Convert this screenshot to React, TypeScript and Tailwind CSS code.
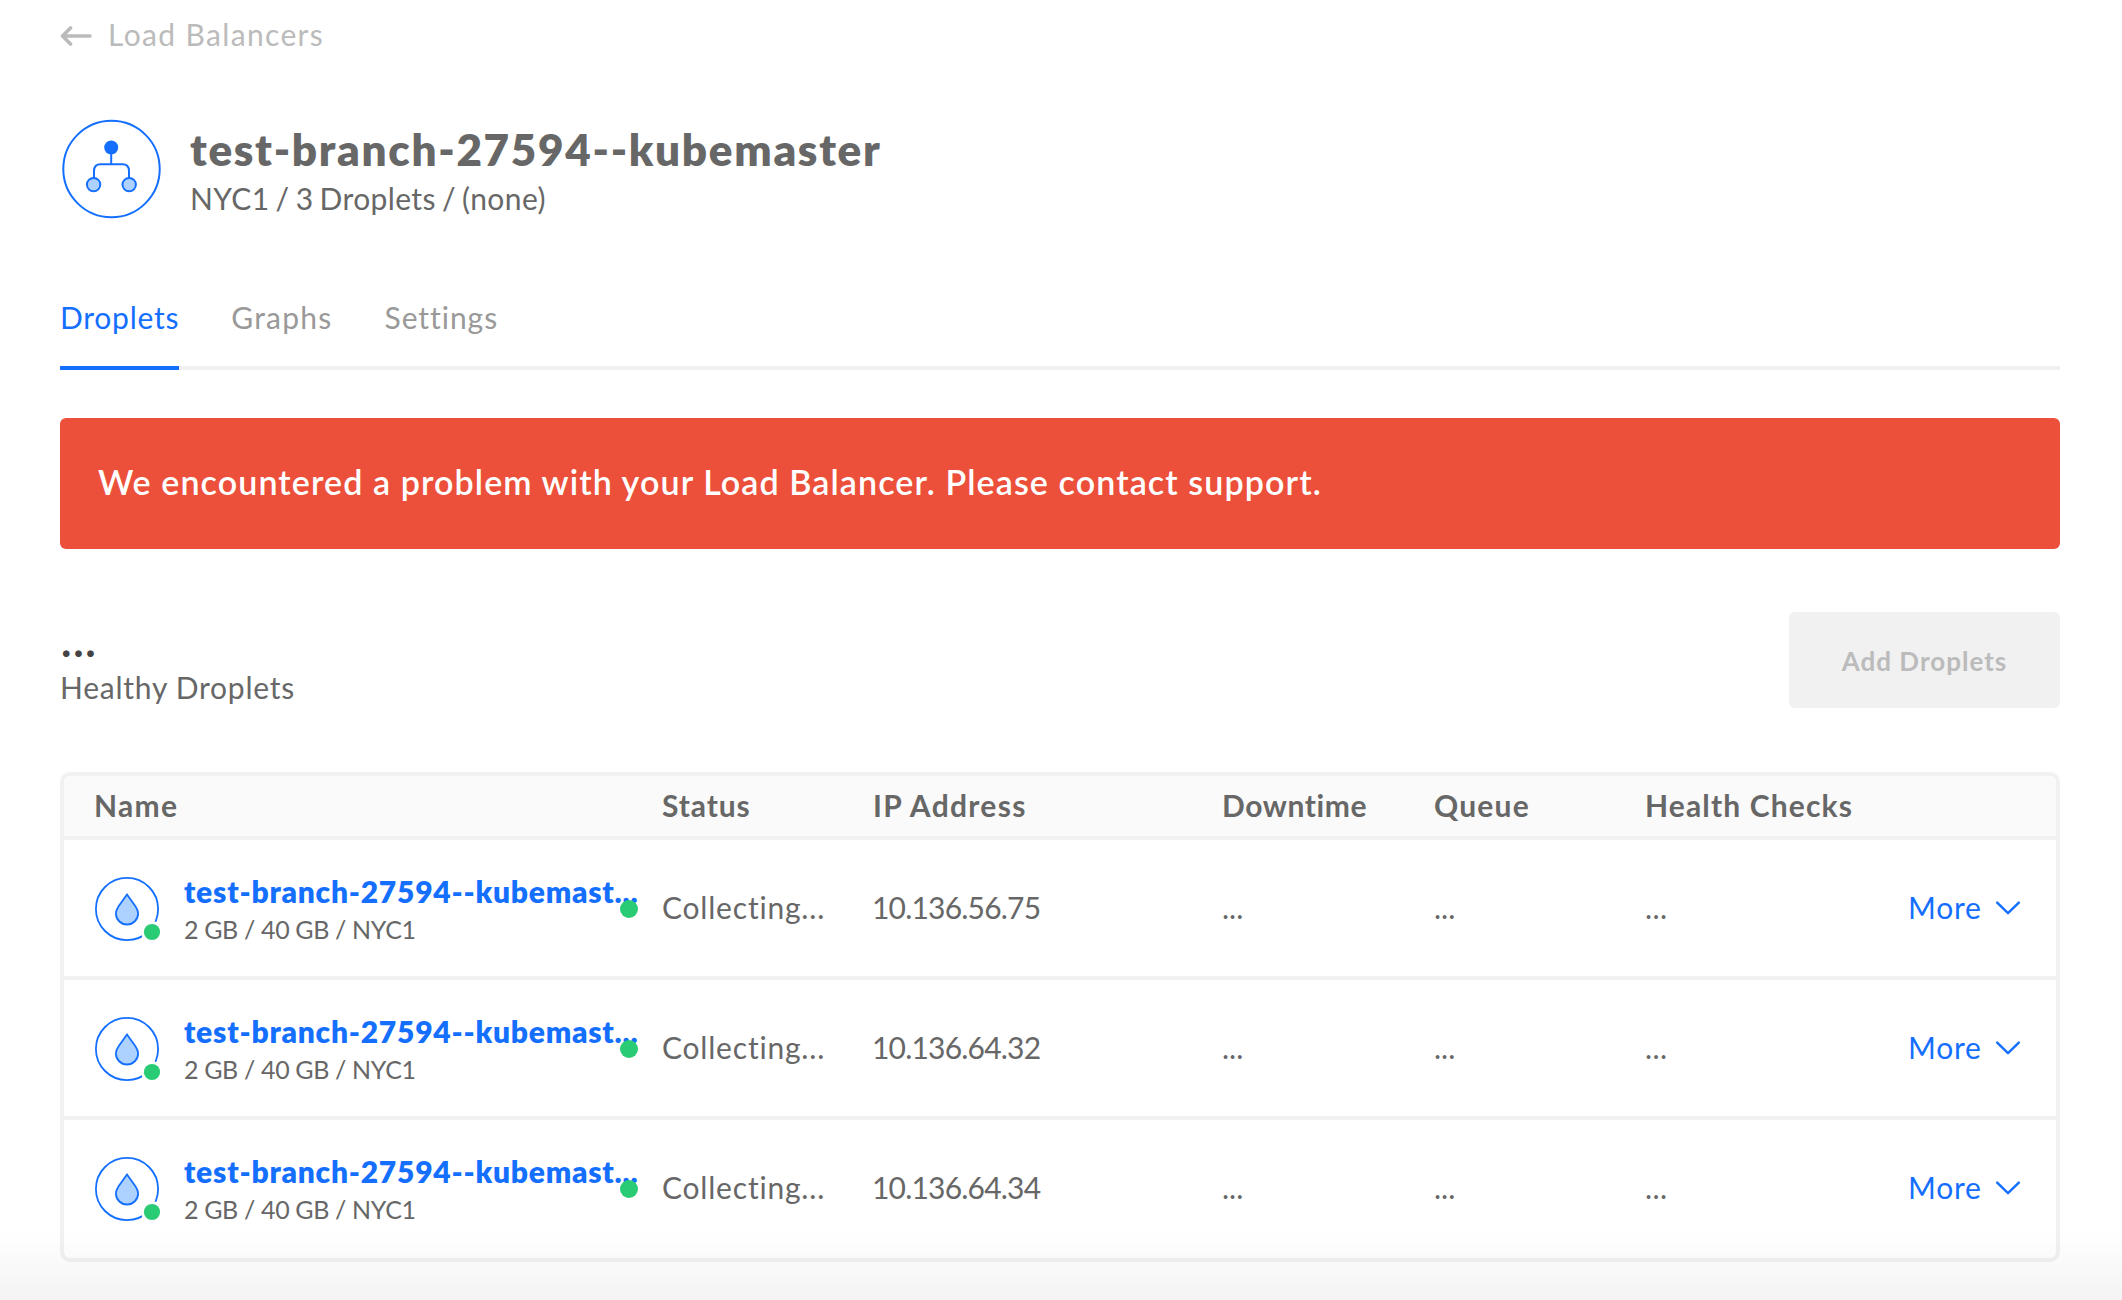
type Droplet = {
  id: string
  name: string
  specs: string
  status: string
  ip: string
}

const droplets: Droplet[] = [
  {
    id: "1",
    name: "test-branch-27594--kubemast...",
    specs: "2 GB / 40 GB / NYC1",
    status: "Collecting...",
    ip: "10.136.56.75",
  },
  {
    id: "2",
    name: "test-branch-27594--kubemast...",
    specs: "2 GB / 40 GB / NYC1",
    status: "Collecting...",
    ip: "10.136.64.32",
  },
  {
    id: "3",
    name: "test-branch-27594--kubemast...",
    specs: "2 GB / 40 GB / NYC1",
    status: "Collecting...",
    ip: "10.136.64.34",
  },
]

const columns = "grid grid-cols-[568px_211px_349px_212px_211px_264px_1fr] pl-[30px]"

function BackArrow() {
  return (
    <svg className="h-9 w-8 shrink-0" viewBox="0 0 32 36" fill="none" stroke="#bbbbbb" strokeWidth="3.6" strokeLinecap="round" strokeLinejoin="round">
      <path d="M30 20H3M10.5 12L2.5 20L10.5 28" />
    </svg>
  )
}

function LoadBalancerIcon() {
  return (
    <svg className="ml-px size-[100px] shrink-0" viewBox="0 0 100 100" fill="none" stroke="#146fff" strokeWidth="2">
      <circle cx="50.5" cy="50" r="48.2" />
      <circle cx="50.2" cy="28.5" r="7" fill="#146fff" stroke="none" />
      <path d="M50.2 34V45.3M33 59V52Q33 45.3 39.5 45.3H61.5Q68 45.3 68 52V59" />
      <circle cx="32.6" cy="65.6" r="6.7" fill="#aed2ff" />
      <circle cx="68.2" cy="65.6" r="6.7" fill="#aed2ff" />
    </svg>
  )
}

function DropletIcon() {
  return (
    <svg className="ml-px size-[70px] shrink-0" viewBox="0 0 70 70" fill="none" stroke="#146fff" strokeWidth="1.8">
      <circle cx="32" cy="35" r="31.1" />
      <path d="M32 20.5L23.6 32.2C21.8 34.8 20.9 37 20.9 39.4A11.1 11.1 0 0 0 43.1 39.4C43.1 37 42.2 34.8 40.4 32.2Z" fill="#aed2ff" />
      <circle cx="57" cy="58" r="10.8" fill="#ffffff" stroke="none" />
      <circle cx="57" cy="58" r="8.1" fill="#29cc74" stroke="none" />
    </svg>
  )
}

function ChevronDown() {
  return (
    <svg className="h-4 w-[26px]" viewBox="0 0 26 16" fill="none" stroke="#146fff" strokeWidth="2.4" strokeLinecap="round" strokeLinejoin="round">
      <path d="M2.2 2.6L13 13.2L23.8 2.6" />
    </svg>
  )
}

function DropletRow({ droplet }: { droplet: Droplet }) {
  return (
    <div className={`${columns} h-[140px] border-b-4 border-[#f1f1f1] leading-9 last:h-[138px] last:border-b-0`}>
      <div className="relative flex pt-[34px]">
        <DropletIcon />
        <div className="ml-[19px]">
          <a className="mt-[-1px] block font-extrabold whitespace-nowrap text-[#146fff] tracking-[0.75px]">{droplet.name}</a>
          <div className="mt-[2px] text-[25px] tracking-[-0.35px]">{droplet.specs}</div>
        </div>
        <span className="absolute top-[60px] right-[24px] size-[18px] rounded-full bg-[#29cc74]" />
      </div>
      <div className="pt-[49px] tracking-[0.8px]">{droplet.status}</div>
      <div className="ml-[-1px] pt-[49px] tracking-[-0.8px]">{droplet.ip}</div>
      <div className="pt-[49px]">...</div>
      <div className="pt-[49px]">...</div>
      <div className="pt-[49px] tracking-[0.4px]">...</div>
      <div className="flex items-start pt-12 text-[#146fff]">
        <span className="mt-px ml-[-1px] w-[87px] tracking-[0.8px]">More</span>
        <span className="mt-3">
          <ChevronDown />
        </span>
      </div>
    </div>
  )
}

export default function App() {
  return (
    <div className="relative h-[1300px] w-[2122px] overflow-hidden bg-white px-[60px] pt-4 pr-[62px] font-['Lato',sans-serif] text-[30px] leading-9 text-[#676767]">
      <a className="flex h-9 items-center text-[#bbbbbb]">
        <BackArrow />
        <span className="ml-4 tracking-[1.35px]">Load Balancers</span>
      </a>

      <header className="mt-[67px] flex h-[100px]">
        <LoadBalancerIcon />
        <div className="ml-[29px] pt-[6px]">
          <h1 className="text-[44px] leading-[48px] font-extrabold tracking-[1.7px]">test-branch-27594--kubemaster</h1>
          <p className="mt-[7px] tracking-[0.4px] [word-spacing:-2px]">NYC1 / 3 Droplets / (none)</p>
        </div>
      </header>

      <nav className="mt-[80px] flex h-[71px] gap-[52px] border-b-4 border-[#f1f1f1] text-[#999999]">
        <a className="h-[71px] border-b-4 border-[#146fff] text-[#146fff] tracking-[0.75px]">Droplets</a>
        <a className="tracking-[1.25px]">Graphs</a>
        <a className="tracking-[0.95px]">Settings</a>
      </nav>

      <div className="mt-12 h-[131px] rounded-md bg-[#ec503a] px-[38px] pt-[46px] text-[34px] font-semibold tracking-[1.1px] text-white">
        We encountered a problem with your Load Balancer. Please contact support.
      </div>

      <div className="mt-[63px] flex h-24 justify-between">
        <div className="pt-3">
          <div className="ml-px h-8 text-[44px] leading-8 font-bold tracking-[1.7px] text-[#444444]">...</div>
          <div className="mt-[13px] tracking-[0.75px]">Healthy Droplets</div>
        </div>
        <button className="h-24 w-[271px] rounded-md bg-[#f1f1f1] pt-px text-[26px] font-bold tracking-[1px] text-[#bbbbbb]">Add Droplets</button>
      </div>

      <div className="mt-16 h-[490px] rounded-[10px] border-4 border-[#f1f1f1]">
        <div className={`${columns} h-16 rounded-t-md border-b-4 border-[#f1f1f1] bg-[#fafafa] pt-[11px] font-bold`}>
          <div className="tracking-[1.3px]">Name</div>
          <div className="tracking-[0.9px]">Status</div>
          <div className="tracking-[1.3px]">IP Address</div>
          <div className="tracking-[0.6px]">Downtime</div>
          <div className="tracking-[1.2px]">Queue</div>
          <div className="tracking-[1.15px]">Health Checks</div>
        </div>
        {droplets.map((droplet) => (
          <DropletRow key={droplet.id} droplet={droplet} />
        ))}
      </div>

      <div className="pointer-events-none absolute inset-x-0 bottom-0 h-[70px] bg-linear-to-b from-transparent to-black/[0.045]" />
    </div>
  )
}
